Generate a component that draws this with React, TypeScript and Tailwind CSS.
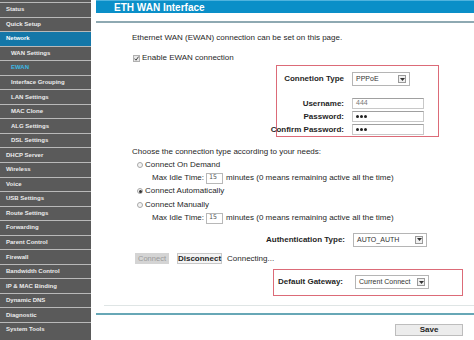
import React from "react";

const menu: { label: string; sub?: boolean; active?: boolean; current?: boolean }[] = [
  { label: "Status" },
  { label: "Quick Setup" },
  { label: "Network", active: true },
  { label: "WAN Settings", sub: true },
  { label: "EWAN", sub: true, current: true },
  { label: "Interface Grouping", sub: true },
  { label: "LAN Settings", sub: true },
  { label: "MAC Clone", sub: true },
  { label: "ALG Settings", sub: true },
  { label: "DSL Settings", sub: true },
  { label: "DHCP Server" },
  { label: "Wireless" },
  { label: "Voice" },
  { label: "USB Settings" },
  { label: "Route Settings" },
  { label: "Forwarding" },
  { label: "Parent Control" },
  { label: "Firewall" },
  { label: "Bandwidth Control" },
  { label: "IP & MAC Binding" },
  { label: "Dynamic DNS" },
  { label: "Diagnostic" },
  { label: "System Tools" },
];

function Arrow() {
  return (
    <span className="flex h-[8px] w-[8px] items-center justify-center border border-[#9a9a9a] bg-[#f0f0f0]">
      <svg width="5" height="3" viewBox="0 0 5 3">
        <path d="M0 0 L5 0 L2.5 3 Z" fill="#333" />
      </svg>
    </span>
  );
}

function Select({ value, width }: { value: string; width: string }) {
  return (
    <div className={`flex h-[14px] items-center justify-between border border-[#b5b5b5] bg-white pl-[3px] pr-[3px] text-[7px] text-[#333] ${width}`}>
      <span>{value}</span>
      <Arrow />
    </div>
  );
}

function Field({ value, dots }: { value: string; dots?: boolean }) {
  return (
    <div className="flex h-[11px] w-[72px] items-center border border-[#c8c8c8] border-t-[#a0a0a0] bg-white pl-[3px] text-[7px] text-[#777]">
      {dots ? (
        <span className="flex gap-[1px]">
          <span className="h-[3px] w-[3px] rounded-full bg-[#222]" />
          <span className="h-[3px] w-[3px] rounded-full bg-[#222]" />
          <span className="h-[3px] w-[3px] rounded-full bg-[#222]" />
        </span>
      ) : (
        value
      )}
    </div>
  );
}

function Radio({ checked }: { checked?: boolean }) {
  return (
    <span className="mr-[2px] flex h-[6px] w-[6px] items-center justify-center rounded-full border border-[#a8a8a8] bg-[#f4f4f4]">
      {checked && <span className="h-[3px] w-[3px] rounded-full bg-[#333]" />}
    </span>
  );
}

function IdleRow() {
  return (
    <div className="flex h-[13.4px] items-center pl-[15px]">
      <span>Max Idle Time:</span>
      <span className="ml-[2px] flex h-[11px] w-[17px] items-center border border-[#b8b8b8] pl-[2px] font-['DejaVu_Sans_Mono',monospace] text-[6.5px] text-[#555]">15</span>
      <span className="ml-[3px]">minutes (0 means remaining active all the time)</span>
    </div>
  );
}

export default function App() {
  return (
    <div className="flex h-[340px] w-[474px] overflow-hidden bg-white font-['Liberation_Sans',Arial,sans-serif] text-[8px] text-[#1f1f1f]">
      <div className="h-full w-[91px] shrink-0 bg-[#5a5a5a] pt-[2px]">
        {menu.map((m) => (
          <div
            key={m.label}
            className={`flex h-[14.55px] items-center border-t border-[#b9b9b9] text-[6px] font-bold whitespace-nowrap ${m.sub ? "pl-[11px]" : "pl-[6px]"} ${m.active ? "bg-[#1477a8] text-white" : m.current ? "text-[#3cb8e4]" : "text-[#ececec]"}`}
          >
            {m.label}
          </div>
        ))}
      </div>

      <div className="ml-[5px] flex flex-1 flex-col">
        <div className="flex h-[13px] items-center border-t border-[#4fb3de] bg-[#0a8fc8] pl-[18px] text-[10px] font-bold text-white">
          ETH WAN Interface
        </div>
        <div className="mt-[8px] h-[2px] bg-[#8ea9b2]" />

        <div className="flex flex-col pl-[36px]">
          <div className="mt-[10px] h-[10px] leading-[10px]">Ethernet WAN (EWAN) connection can be set on this page.</div>
          <div className="mt-[10px] flex h-[10px] items-center">
            <span className="mr-[2px] ml-[1px] flex h-[7px] w-[7px] items-center justify-center border border-[#b0b0b0] bg-[#e8e8e8]">
              <svg width="5" height="5" viewBox="0 0 5 5">
                <path d="M0.5 2.6 L2 4.2 L4.6 0.6" stroke="#333" strokeWidth="0.9" fill="none" />
              </svg>
            </span>
            Enable EWAN connection
          </div>

          <div className="ml-[144px] mt-[2px] flex h-[72px] w-[163px] flex-col border border-[#dc6b78] pt-[5px]">
            <div className="flex h-[16px] items-center">
              <div className="flex w-[67px] justify-end font-bold whitespace-nowrap">Connetion Type</div>
              <div className="ml-[8px]"><Select value="PPPoE" width="w-[58px]" /></div>
            </div>
            <div className="mt-[10px] flex flex-col">
              {[
                ["Username:", "444", false],
                ["Password:", "", true],
                ["Confirm Password:", "", true],
              ].map(([label, val, dots]) => (
                <div key={label as string} className="flex h-[13px] items-center">
                  <div className="flex w-[67px] justify-end font-bold whitespace-nowrap">{label as string}</div>
                  <div className="ml-[8px]"><Field value={val as string} dots={dots as boolean} /></div>
                </div>
              ))}
            </div>
          </div>

          <div className="mt-[10px] h-[10px] leading-[10px]">Choose the connection type according to your needs:</div>
          <div className="mt-[1px] flex flex-col pl-[5px]">
            <div className="flex h-[13.4px] items-center"><Radio />Connect On Demand</div>
            <IdleRow />
            <div className="flex h-[13.4px] items-center"><Radio checked />Connect Automatically</div>
            <div className="flex h-[13.4px] items-center"><Radio />Connect Manually</div>
            <IdleRow />
          </div>

          <div className="mt-[8px] flex h-[14px] items-center">
            <div className="w-[213px] text-right font-bold">Authentication Type:</div>
            <div className="ml-[8px]"><Select value="AUTO_AUTH" width="w-[74px]" /></div>
          </div>

          <div className="mt-[6px] flex h-[12px] items-center">
            <span className="ml-[3px] flex h-[11px] w-[34px] items-center justify-center bg-[#d4d4d4] text-[7.5px] text-[#9a9a9a]">Connect</span>
            <span className="ml-[8px] flex h-[11px] w-[45px] items-center justify-center border border-[#c8c8c8] bg-[#f4f4f4] font-bold">Disconnect</span>
            <span className="ml-[5px]">Connecting...</span>
          </div>

          <div className="ml-[141px] mt-[4px] flex h-[27px] w-[190px] items-center border border-[#dc6b78]">
            <div className="w-[69px] text-right font-bold">Default Gateway:</div>
            <div className="ml-[12px]"><Select value="Current Connect" width="w-[74px]" /></div>
          </div>
        </div>

        <div className="ml-[8px] mt-[9px] h-[1px] bg-[#dfe5e5]" />
        <div className="mt-[7px] h-[2px] bg-[#67a7b6]" />
        <div className="flex justify-end pr-[11px] pt-[9px]">
          <span className="flex h-[12px] w-[68px] items-center justify-center border border-[#bdbdbd] bg-[#ececec] font-bold">Save</span>
        </div>
      </div>
    </div>
  );
}
